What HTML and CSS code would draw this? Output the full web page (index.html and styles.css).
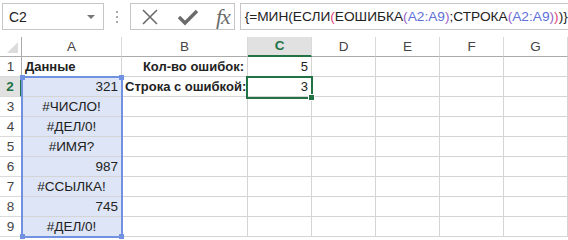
FILE: index.html
```html
<!DOCTYPE html>
<html lang="ru">
<head>
    <meta charset="UTF-8">
    <title>Ошибки в диапазоне</title>
    <link rel="stylesheet" href="styles.css">
</head>
<body>
    <!-- Formula bar -->
    <div class="toolbar">
        <div class="name-box">
            <span class="name-text">C2</span>
            <span class="name-arrow"></span>
        </div>
        <div class="grip"><i></i><i></i><i></i></div>
        <div class="fx-buttons">
            <svg class="btn-icon" width="20" height="20" viewBox="0 0 20 20">
                <path d="M3 3 L17 17 M17 3 L3 17" stroke="#6b6b6b" stroke-width="1.6" fill="none"/>
            </svg>
            <svg class="btn-icon" width="22" height="20" viewBox="0 0 22 20">
                <path d="M2 10 L8 16 L20 4" stroke="#6b6b6b" stroke-width="3.4" fill="none" stroke-linejoin="miter"/>
            </svg>
            <span class="fx-label">fx</span>
        </div>
        <div class="formula">{=МИН(ЕСЛИ<span class="p2">(</span>ЕОШИБКА<span class="p3">(</span><span class="ref">A2:A9</span><span class="p3">)</span>;СТРОКА<span class="p3">(</span><span class="ref">A2:A9</span><span class="p3">)</span><span class="p2">)</span>)}</div>
    </div>

    <!-- Sheet -->
    <div class="sheet">
        <div class="cell corner"><span class="corner-tri"></span></div>
        <div class="cell col-head">A</div>
        <div class="cell col-head">B</div>
        <div class="cell col-head active-head">C</div>
        <div class="cell col-head">D</div>
        <div class="cell col-head">E</div>
        <div class="cell col-head">F</div>
        <div class="cell col-head">G</div>

        <div class="cell row-head">1</div>
        <div class="cell bold">Данные</div>
        <div class="cell bold right">Кол-во ошибок:</div>
        <div class="cell right">5</div>
        <div class="cell"></div><div class="cell"></div><div class="cell"></div><div class="cell"></div>

        <div class="cell row-head active-row">2</div>
        <div class="cell sel right">321</div>
        <div class="cell bold right">Строка с ошибкой:</div>
        <div class="cell right">3</div>
        <div class="cell"></div><div class="cell"></div><div class="cell"></div><div class="cell"></div>

        <div class="cell row-head">3</div>
        <div class="cell sel center">#ЧИСЛО!</div>
        <div class="cell"></div><div class="cell"></div><div class="cell"></div><div class="cell"></div><div class="cell"></div><div class="cell"></div>

        <div class="cell row-head">4</div>
        <div class="cell sel center">#ДЕЛ/0!</div>
        <div class="cell"></div><div class="cell"></div><div class="cell"></div><div class="cell"></div><div class="cell"></div><div class="cell"></div>

        <div class="cell row-head">5</div>
        <div class="cell sel center">#ИМЯ?</div>
        <div class="cell"></div><div class="cell"></div><div class="cell"></div><div class="cell"></div><div class="cell"></div><div class="cell"></div>

        <div class="cell row-head">6</div>
        <div class="cell sel right">987</div>
        <div class="cell"></div><div class="cell"></div><div class="cell"></div><div class="cell"></div><div class="cell"></div><div class="cell"></div>

        <div class="cell row-head">7</div>
        <div class="cell sel center">#ССЫЛКА!</div>
        <div class="cell"></div><div class="cell"></div><div class="cell"></div><div class="cell"></div><div class="cell"></div><div class="cell"></div>

        <div class="cell row-head">8</div>
        <div class="cell sel right">745</div>
        <div class="cell"></div><div class="cell"></div><div class="cell"></div><div class="cell"></div><div class="cell"></div><div class="cell"></div>

        <div class="cell row-head">9</div>
        <div class="cell sel center">#ДЕЛ/0!</div>
        <div class="cell"></div><div class="cell"></div><div class="cell"></div><div class="cell"></div><div class="cell"></div><div class="cell"></div>

        <!-- range highlight A2:A9 -->
        <div class="range-box">
            <span class="handle h-tl"></span>
            <span class="handle h-tr"></span>
            <span class="handle h-bl"></span>
            <span class="handle h-br"></span>
        </div>
        <!-- active cell C2 -->
        <div class="active-box"><span class="fill-handle"></span></div>
    </div>
</body>
</html>
```

FILE: styles.css
```css
body {
    margin: 0;
    background: #fff;
    font-family: 'Liberation Sans', Arial, sans-serif;
    width: 568px;
    height: 240px;
    overflow: hidden;
}
/* Formula bar */
.toolbar {
    display: flex;
    align-items: flex-start;
    height: 37px;
    padding: 3px 0 0 2px;
    box-sizing: border-box;
    overflow: hidden;
}
.name-box {
    width: 105px;
    height: 27px;
    border: 1px solid #c6c6c6;
    box-sizing: border-box;
    display: flex;
    align-items: center;
    justify-content: space-between;
    padding: 0 8px 0 6px;
}
.name-text {
    font-size: 14px;
    color: #222;
}
.name-arrow {
    width: 0;
    height: 0;
    border-left: 4px solid transparent;
    border-right: 4px solid transparent;
    border-top: 4px solid #777;
}
.grip {
    width: 27px;
    height: 27px;
    display: flex;
    flex-direction: column;
    align-items: center;
    justify-content: center;
    gap: 3px;
}
.grip i {
    width: 2px;
    height: 2px;
    background: #a8a8a8;
}
.fx-buttons {
    width: 108px;
    height: 27px;
    border: 1px solid #c6c6c6;
    box-sizing: border-box;
    display: flex;
    align-items: center;
    gap: 17px;
    padding: 0 0 0 9px;
}
.fx-label {
    font-family: 'Liberation Serif', 'Times New Roman', serif;
    font-style: italic;
    font-size: 22px;
    line-height: 25px;
    color: #6b6b6b;
    letter-spacing: -1px;
}
.formula {
    margin-left: 5px;
    width: 340px;
    height: 27px;
    border: 1px solid #c6c6c6;
    border-right: none;
    box-sizing: border-box;
    padding: 0 0 0 4px;
    font-size: 13.7px;
    line-height: 25px;
    color: #222;
    white-space: nowrap;
}
.p2 { color: #e0457b; }
.p3 { color: #9a5fc8; }
.ref { color: #5d6fd8; }

/* Sheet grid */
.sheet {
    position: relative;
    display: grid;
    grid-template-columns: 22px 100px 126px 64px 64px 64px 64px 64px;
    grid-auto-rows: 20px;
    font-size: 13px;
    color: #222;
}
.cell {
    border-right: 1px solid #d4d4d4;
    border-bottom: 1px solid #d4d4d4;
    box-sizing: border-box;
    padding: 0 3px;
    line-height: 19px;
    white-space: nowrap;
    overflow: visible;
}
.bold { font-weight: bold; }
.right { text-align: right; }
.center { text-align: center; }
.sel {
    background: #dde5f6;
    font-size: 13.5px;
}
.col-head {
    text-align: center;
    color: #444;
    font-size: 13.5px;
    border-bottom-color: #ababab;
    border-right-color: #dadada;
}
.row-head {
    text-align: center;
    color: #444;
    font-size: 13.5px;
    padding: 0;
    border-right-color: #ababab;
    border-bottom-color: #dadada;
}
.corner {
    position: relative;
    border-bottom-color: #ababab;
    border-right-color: #ababab;
}
.corner-tri {
    position: absolute;
    right: 3px;
    bottom: 3px;
    width: 0;
    height: 0;
    border-left: 11px solid transparent;
    border-bottom: 11px solid #dcdcdc;
}
.active-head {
    background: #e1e1e1;
    color: #217346;
    font-weight: bold;
    border-bottom: 2px solid #217346;
    line-height: 18px;
}
.active-row {
    background: #e1e1e1;
    color: #217346;
    font-weight: bold;
    border-right: 2px solid #217346;
}
.range-box {
    position: absolute;
    left: 21px;
    top: 39px;
    width: 102px;
    height: 162px;
    border: 2px solid #7092e0;
    box-sizing: border-box;
}
.handle {
    position: absolute;
    width: 5px;
    height: 5px;
    background: #7092e0;
}
.h-tl { left: -3px; top: -3px; }
.h-tr { right: -3px; top: -3px; }
.h-bl { left: -3px; bottom: -3px; }
.h-br { right: -3px; bottom: -3px; }
.active-box {
    position: absolute;
    left: 246px;
    top: 39px;
    width: 67px;
    height: 23px;
    border: 2px solid #217346;
    box-sizing: border-box;
}
.fill-handle {
    position: absolute;
    right: -4px;
    bottom: -4px;
    width: 5px;
    height: 5px;
    background: #217346;
    border: 1px solid #fff;
}
```
